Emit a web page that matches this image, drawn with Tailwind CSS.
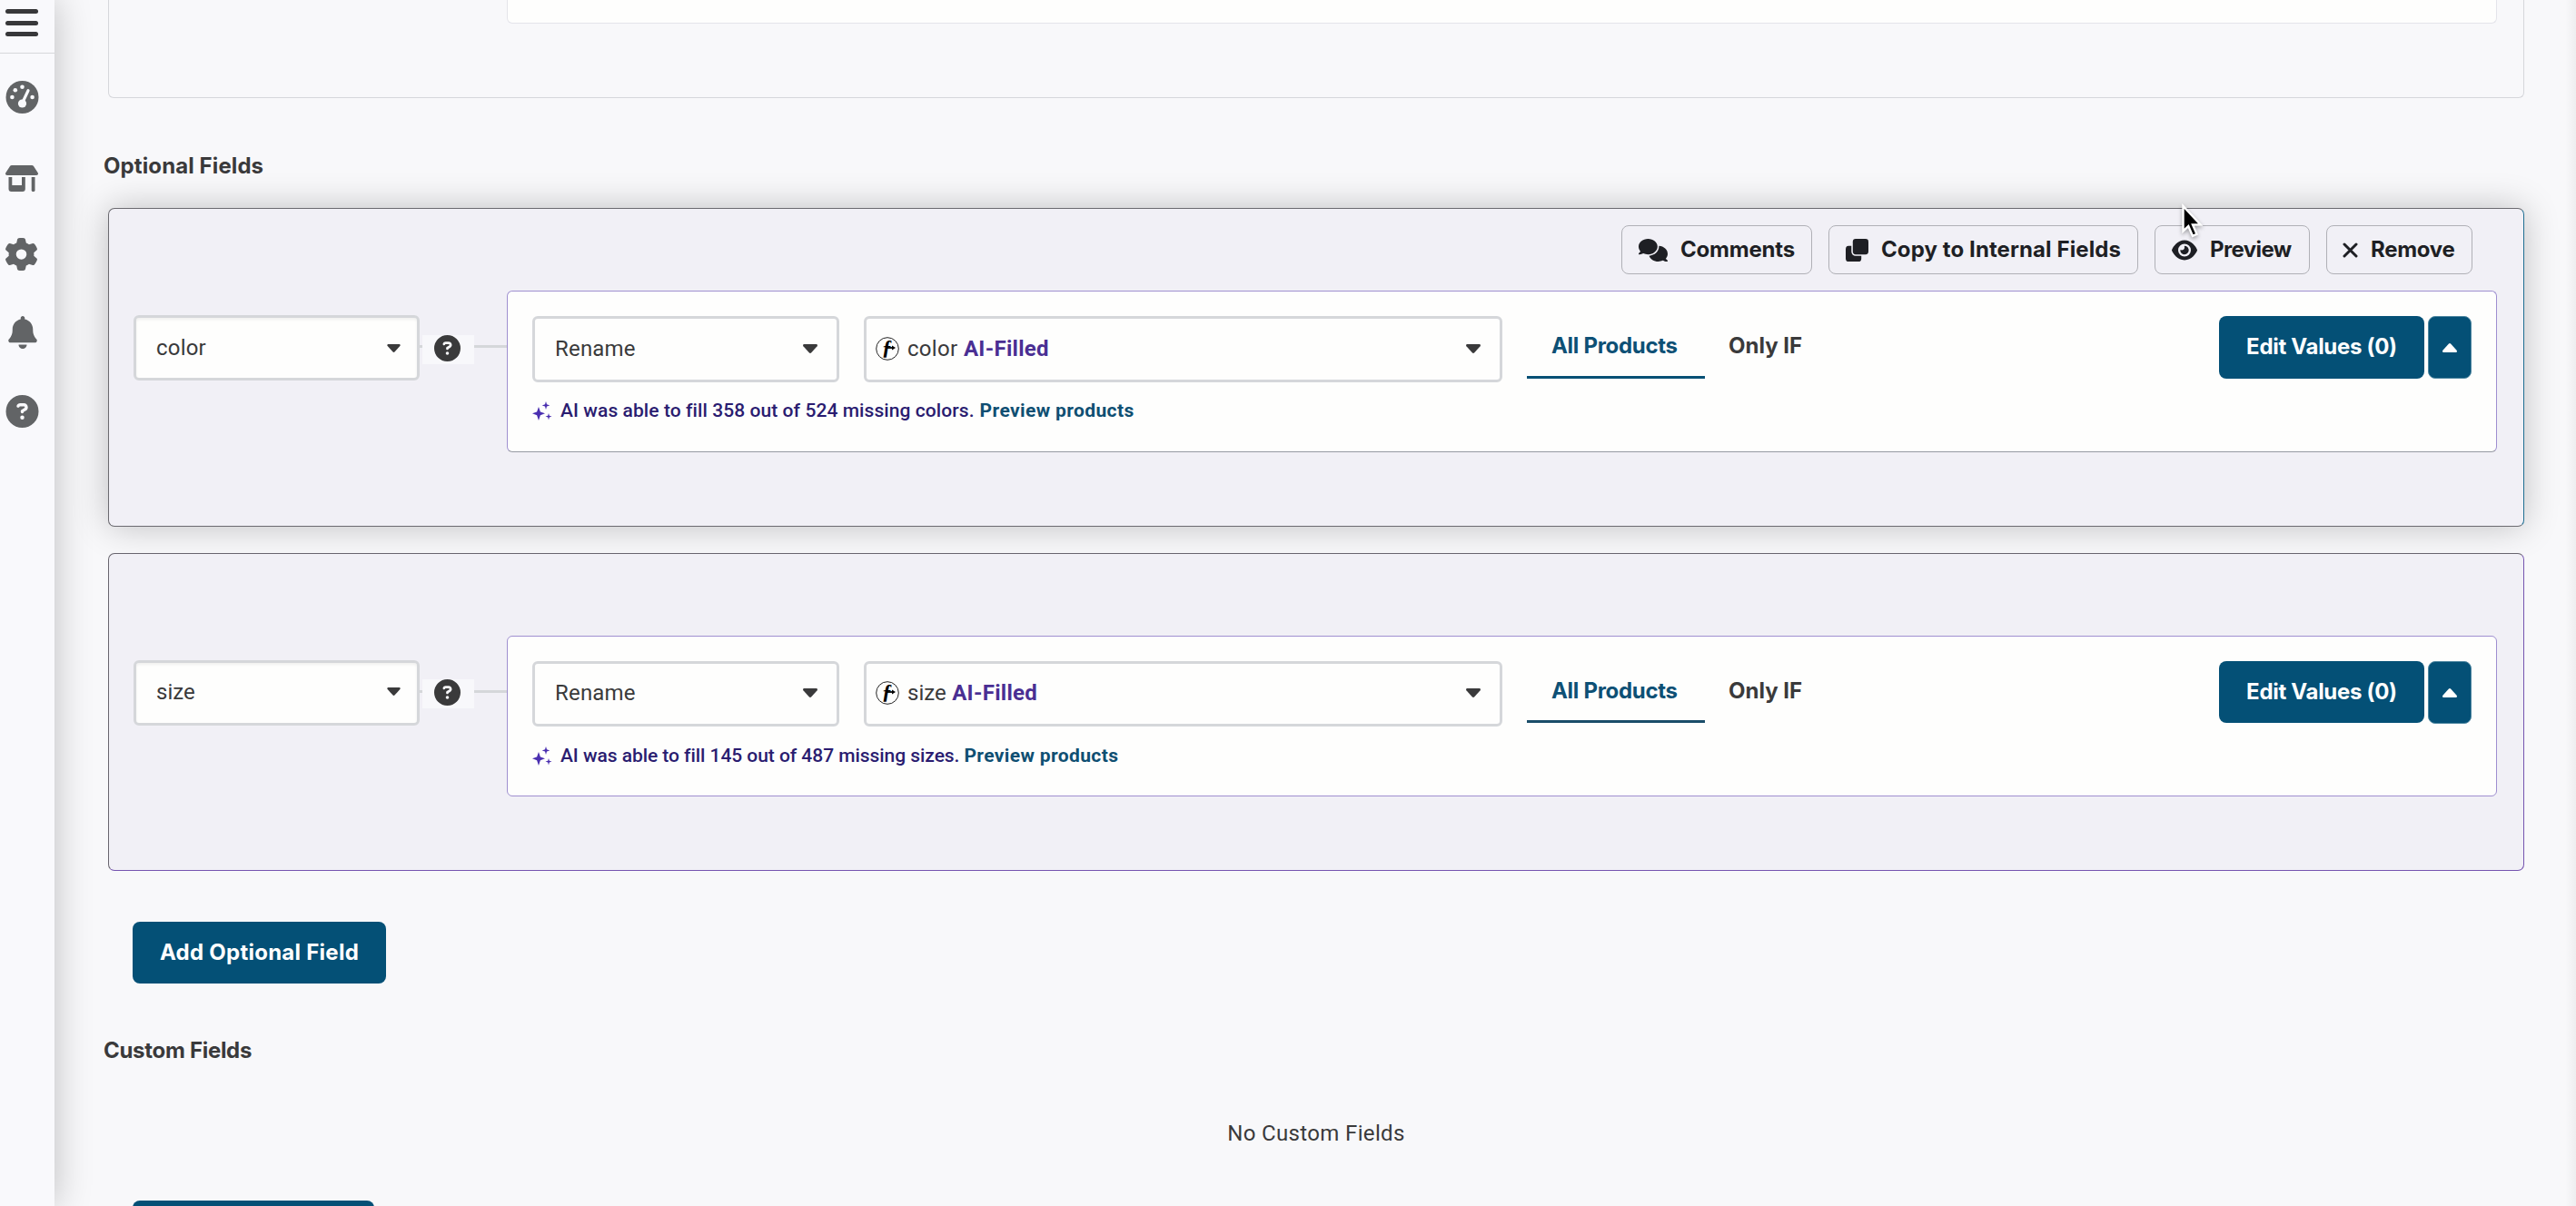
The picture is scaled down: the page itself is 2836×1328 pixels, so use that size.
<!DOCTYPE html>
<html lang="en">
<head>
  <meta charset="UTF-8">
  <meta name="viewport" content="width=device-width, initial-scale=1.0">
  <title>Field Mapping</title>
  <script src="https://cdn.jsdelivr.net/npm/@tailwindcss/browser@4"></script>
</head>
<body class="relative flex h-screen overflow-hidden bg-[#f8f8fa] font-[Roboto,sans-serif] text-2xl text-[#3a3a3b]">

  <!-- Shared icons -->
  <svg class="hidden">
    <symbol id="question" viewBox="0 0 512 512">
      <path fill="currentColor" d="M256 512A256 256 0 1 0 256 0a256 256 0 1 0 0 512zM169.8 165.3c7.9-22.3 29.1-37.3 52.8-37.3h58.3c34.9 0 63.1 28.3 63.1 63.1c0 22.6-12.1 43.5-31.7 54.8L280 264.4c-.2 13-10.9 23.6-24 23.6c-13.3 0-24-10.7-24-24V250.5c0-8.6 4.6-16.5 12.1-20.8l44.3-25.4c4.7-2.7 7.6-7.7 7.6-13.1c0-8.4-6.8-15.1-15.1-15.1H222.6c-3.4 0-6.4 2.1-7.5 5.3l-.4 1.2c-4.4 12.5-18.2 19-30.6 14.6s-19-18.2-14.6-30.6l.4-1.2zM224 352a32 32 0 1 1 64 0 32 32 0 1 1 -64 0z"/>
    </symbol>
    <symbol id="caret" viewBox="0 0 16 10">
      <path fill="currentColor" d="M1.4 0h13.2c1.2 0 1.8 1.4 1 2.3L9.3 9.3a1.8 1.8 0 0 1-2.600 0L.4 2.300C-.4 1.400.2 0 1.400 0z"/>
    </symbol>
    <symbol id="sparkles" viewBox="0 0 22 21">
      <path fill="currentColor" d="M7 6l1.900 5.400L14 13.300l-5.100 1.900L7 21l-1.900-5.800L0 13.300l5.100-1.900zM15 0l1 3.200 3.300 1.200L16 5.600 15 9l-1-3.400-3.300-1.200L14 3.200zM18 13l.8 2.700 2.700.9-2.700.9L18 20.500l-.8-3-2.700-.9 2.700-.9z"/>
    </symbol>
    <symbol id="func" viewBox="0 0 26 26">
      <circle cx="13" cy="13" r="12.300" fill="none" stroke="#222" stroke-width="1"/>
      <text x="12.500" y="18.500" text-anchor="middle" font-family="Liberation Serif, serif" font-style="italic" font-weight="bold" font-size="23" fill="#000">ƒ</text>
      <path d="M13 12h6" stroke="#000" stroke-width="1.800"/><path d="M18 9.500l4 2.500-4 2.500z"/>
    </symbol>
  </svg>

  <!-- Sidebar -->
  <nav class="z-10 flex w-[60px] shrink-0 flex-col bg-[#f9f9fc] pl-1.5 text-[#626466] shadow-[0_0_42px_rgba(0,0,0,0.24)]">
    <div class="-ml-1.5 flex h-[59px] shrink-0 flex-col gap-[7.5px] border-b border-[#d6d8da] pt-2.5 pl-1.5">
      <span class="h-[5px] w-9 rounded-full bg-[#38383a]"></span>
      <span class="h-[5px] w-9 rounded-full bg-[#38383a]"></span>
      <span class="h-[5px] w-9 rounded-full bg-[#38383a]"></span>
    </div>
    <svg class="mt-[30px] h-9 w-[37px]" viewBox="0 0 36 36">
      <circle cx="18" cy="18" r="18" fill="currentColor"/>
      <g fill="#f9f9fc">
        <circle cx="18" cy="6.700" r="2.300"/><circle cx="10.300" cy="10.200" r="2.300"/><circle cx="6.900" cy="18" r="2.300"/><circle cx="29.100" cy="18" r="2.300"/><circle cx="18" cy="25" r="4.600"/>
      </g>
      <path d="M18.500 23.500L24.500 10.700" stroke="#f9f9fc" stroke-width="3.200" stroke-linecap="round"/>
    </svg>
    <svg class="mt-[57px] h-[29px] w-9" viewBox="0 0 36 29" fill="currentColor">
      <path d="M7 0h22c.9 0 1.600.4 2 1.100l4.700 7.200c.8 1.300 0 2.700-1.500 2.700H1.800C.3 11-.5 9.600.3 8.300L5 1.100C5.400.4 6.100 0 7 0z"/>
      <path fill-rule="evenodd" d="M3.500 13h3.800v9H18v-9h3.800v13a3 3 0 0 1-3 3H6.500a3 3 0 0 1-3-3z"/>
      <path d="M28.700 13h3.800v14.200a1.900 1.900 0 0 1-3.800 0z"/>
    </svg>
    <svg class="mt-[51px] h-9 w-[35px]" viewBox="14 0 484 512" preserveAspectRatio="none">
      <path fill="currentColor" d="M495.9 166.6c3.2 8.7 .5 18.4-6.4 24.6l-43.3 39.4c1.1 8.3 1.7 16.8 1.7 25.4s-.6 17.1-1.7 25.4l43.3 39.4c6.9 6.2 9.6 15.9 6.4 24.6c-4.4 11.9-9.7 23.3-15.8 34.3l-4.7 8.1c-6.6 11-14 21.4-22.1 31.2c-5.9 7.2-15.7 9.6-24.5 6.8l-55.7-17.7c-13.4 10.3-28.2 18.9-44 25.4l-12.5 57.1c-2 9.1-9 16.3-18.2 17.8c-13.8 2.3-28 3.5-42.5 3.5s-28.7-1.2-42.5-3.5c-9.2-1.5-16.2-8.7-18.2-17.8l-12.5-57.1c-15.8-6.5-30.6-15.1-44-25.4L83.1 425.9c-8.8 2.8-18.6 .3-24.5-6.8c-8.1-9.8-15.5-20.2-22.1-31.2l-4.7-8.1c-6.1-11-11.4-22.4-15.8-34.3c-3.2-8.7-.5-18.4 6.4-24.6l43.3-39.4C64.6 273.1 64 264.6 64 256s.6-17.1 1.7-25.4L22.4 191.2c-6.900-6.200-9.600-15.900-6.400-24.600c4.400-11.900 9.700-23.300 15.800-34.300l4.700-8.100c6.600-11 14-21.400 22.100-31.200c5.900-7.200 15.700-9.600 24.500-6.800l55.700 17.700c13.400-10.300 28.200-18.900 44-25.400l12.500-57.100c2-9.100 9-16.300 18.200-17.800C227.300 1.200 241.500 0 256 0s28.700 1.200 42.500 3.500c9.200 1.500 16.200 8.700 18.200 17.800l12.500 57.100c15.800 6.500 30.600 15.100 44 25.400l55.700-17.700c8.800-2.800 18.600-.3 24.500 6.800c8.100 9.800 15.500 20.200 22.100 31.200l4.700 8.100c6.100 11 11.400 22.400 15.800 34.300zM256 336a80 80 0 1 0 0-160 80 80 0 1 0 0 160z"/>
    </svg>
    <svg class="mt-[50px] ml-[2.5px] h-9 w-8" viewBox="0 0 448 512">
      <path fill="currentColor" d="M224 0c-17.700 0-32 14.300-32 32V51.200C119 66 64 130.600 64 208v18.800c0 47-17.300 92.400-48.500 127.600l-7.400 8.300c-8.400 9.400-10.400 22.900-5.300 34.400S19.400 416 32 416H416c12.600 0 24-7.400 29.200-18.900s3.100-25-5.300-34.400l-7.400-8.300C401.300 319.200 384 273.900 384 226.800V208c0-77.400-55-142-128-156.800V32c0-17.700-14.300-32-32-32zm45.300 493.300c12-12 18.700-28.300 18.700-45.300H224 160c0 17 6.700 33.300 18.700 45.300s28.300 18.700 45.300 18.700s33.300-6.700 45.300-18.700z"/>
    </svg>
    <svg class="mt-[51px] h-9 w-[37px]"><use href="#question"/></svg>
  </nav>

  <!-- Main column -->
  <main class="flex flex-1 flex-col pr-[57px] pl-[59px]">

    <!-- Tail of the required fields card -->
    <section class="flex h-[108px] shrink-0 justify-end rounded-b-md border border-t-0 border-[#d6d7db] pr-[29px]">
      <div class="h-[26px] w-[2191px] rounded-b-md border border-t-0 border-[#e4e4ea] bg-[#fefefd]"></div>
    </section>

    <h2 class="mt-[60px] -ml-[5px] h-[30px] shrink-0 font-['Inter'] leading-[30px] font-bold tracking-[0.1px]">Optional Fields</h2>

    <!-- color -->
    <section class="mt-[31px] flex h-[351px] shrink-0 flex-col rounded-[7px] border border-[#6b6a70] border-r-[#1f6f93] bg-[#f1f0f6] shadow-[0_0_38px_rgba(0,0,0,0.23)]">
      <div class="flex h-[90px] justify-end gap-[18px] pt-[18px] pr-14 font-['Inter'] font-bold text-[#1e1f24]">
        <button class="flex h-[54px] w-[210px] items-center rounded-lg border border-[#b0b0b6] pl-[18px]">
          <svg class="mr-3.5 h-[25px] w-8" viewBox="0 0 640 512" preserveAspectRatio="none"><path fill="currentColor" d="M208 352c114.900 0 208-78.800 208-176S322.900 0 208 0S0 78.800 0 176c0 38.600 14.700 74.300 39.600 103.400c-3.500 9.400-8.700 17.700-14.200 24.700c-4.800 6.200-9.700 11-13.300 14.300c-1.800 1.600-3.300 2.900-4.300 3.700c-.5 .4-.9 .7-1.100 .8l-.2 .2C1 327.200-1.400 334.400 .8 340.900S9.100 352 16 352c21.800 0 43.800-5.600 62.100-12.500c9.200-3.500 17.800-7.400 25.200-11.400C134.100 343.300 169.800 352 208 352zM448 176c0 112.300-99.100 196.900-216.500 207C255.800 457.400 336.400 512 432 512c38.200 0 73.900-8.700 104.700-23.900c7.500 4 16 7.900 25.200 11.400c18.300 6.900 40.300 12.500 62.100 12.500c6.900 0 13.100-4.500 15.200-11.100c2.100-6.600-.2-13.800-5.800-17.900l-.2-.2c-.2-.2-.6-.4-1.100-.8c-1-.8-2.500-2-4.300-3.700c-3.600-3.300-8.500-8.100-13.300-14.300c-5.500-7-10.700-15.400-14.200-24.700c24.900-29 39.600-64.700 39.600-103.400c0-92.800-84.900-168.900-192.600-175.500c.4 5.100 .6 10.300 .6 15.500z"/></svg>
          <span class="tracking-[-0.2px]">Comments</span>
        </button>
        <button class="flex h-[54px] w-[341px] items-center rounded-lg border border-[#b0b0b6] pl-[18px]">
          <svg class="mr-3.5 size-[25px]" viewBox="0 0 512 512" fill="currentColor"><rect x="160" width="352" height="352" rx="64"/><path d="M0 224a64 64 0 0 1 64-64h64v128a96 96 0 0 0 96 96h128v64a64 64 0 0 1-64 64H64a64 64 0 0 1-64-64z"/></svg>
          <span class="tracking-[0.1px]">Copy to Internal Fields</span>
        </button>
        <button class="flex h-[54px] w-[171px] items-center rounded-lg border border-[#b0b0b6] pl-[18px]">
          <svg class="mr-3.5 h-[25px] w-7" viewBox="0 0 576 512"><path fill="currentColor" d="M288 32c-80.800 0-145.500 36.800-192.600 80.600C48.600 156 17.300 208 2.500 243.700c-3.300 7.900-3.300 16.700 0 24.600C17.300 304 48.600 356 95.400 399.400C142.500 443.200 207.200 480 288 480s145.500-36.800 192.600-80.600c46.800-43.500 78.100-95.400 93-131.100c3.300-7.900 3.300-16.700 0-24.600c-14.900-35.700-46.200-87.700-93-131.100C433.500 68.800 368.800 32 288 32zM144 256a144 144 0 1 1 288 0 144 144 0 1 1 -288 0zm144-64c0 35.300-28.700 64-64 64c-7.100 0-13.900-1.200-20.300-3.300c-5.500-1.800-11.900 1.600-11.700 7.400c.3 6.900 1.300 13.800 3.200 20.700c13.700 51.200 66.400 81.600 117.600 67.900s81.600-66.400 67.900-117.600c-11.100-41.500-47.800-69.400-88.600-71.100c-5.800-.2-9.200 6.100-7.400 11.700c2.100 6.400 3.300 13.200 3.300 20.300z"/></svg>
          <span class="tracking-[-0.6px]">Preview</span>
        </button>
        <button class="flex h-[54px] w-[161px] items-center rounded-lg border border-[#b0b0b6] pl-[17px]">
          <svg class="mr-3.5 size-[17px]" viewBox="0 0 17 17"><path d="M2 2l13 13M15 2L2 15" stroke="currentColor" stroke-width="3" stroke-linecap="round"/></svg>
          <span class="tracking-[-0.3px]">Remove</span>
        </button>
      </div>

      <div class="flex items-start pl-[27px]">
        <div class="mt-[27px] flex h-[72px] w-[315px] items-center justify-between rounded-md border-3 border-[#d5d7da] bg-[#fefefd] pr-[18px] pl-[22px] shadow-[inset_0_2px_3px_rgba(0,0,0,0.06)]">
          <span class="tracking-[0.2px]">color</span>
          <svg class="h-[9px] w-[15px]"><use href="#caret"/></svg>
        </div>
        <div class="mt-[60px] flex h-[3px] w-24 bg-[#d5d7da]">
          <div class="-mt-[11px] ml-[3px] h-8 w-[57px] shrink-0 bg-[#f8f8fb] pl-[13px]">
            <svg class="size-[29px]"><use href="#question"/></svg>
          </div>
        </div>

        <div class="h-[178px] w-[2191px] rounded-md border border-[#9f8fd0] border-b-[#9699a3] bg-[#fefefd] px-[27px]">
          <div class="flex items-start">
            <div class="mt-[27px] flex h-[73px] w-[338px] items-center justify-between rounded-md border-3 border-[#d5d7da] pr-[21px] pb-px pl-[22px]">
              <span class="tracking-[0.2px]">Rename</span>
              <svg class="h-2.5 w-4"><use href="#caret"/></svg>
            </div>
            <div class="mt-[27px] ml-[27px] flex h-[73px] w-[703px] items-center rounded-md border-3 border-[#d5d7da] pr-[21px] pb-px pl-[10px]">
              <svg class="mr-[9px] size-[26px]"><use href="#func"/></svg>
              <span class="tracking-[0.3px]">color</span>
              <span class="ml-[6.5px] font-bold tracking-[0.3px] text-[#4a2f93]">AI-Filled</span>
              <svg class="ml-auto h-2.5 w-4"><use href="#caret"/></svg>
            </div>
            <div class="mt-[26px] ml-[27px] flex h-[70px] font-['Inter'] font-bold">
              <span class="flex w-[196px] items-center border-b-3 border-[#065075] pl-[27px] tracking-[-0.3px] text-[#0d5075]">All Products</span>
              <span class="flex items-center border-b-3 border-transparent pl-[26px]">Only IF</span>
            </div>
            <div class="mt-[27px] ml-auto flex gap-1 font-['Inter'] font-bold text-white">
              <button class="flex h-[69px] w-[226px] items-center justify-center rounded-lg bg-[#045076] pb-0.5 tracking-[-0.3px]">Edit Values (0)</button>
              <button class="flex h-[69px] w-12 items-center justify-center rounded-lg border border-[#4d86a0] bg-[#045076]"><svg class="h-2.5 w-4 rotate-180"><use href="#caret"/></svg></button>
            </div>
          </div>
          <p class="mt-[19px] flex h-6 items-center text-[21px] leading-6 font-medium tracking-[0.08px] text-[#2a1c70]">
            <svg class="mr-[9px] h-[21px] w-[22px] text-[#4a2fb0]"><use href="#sparkles"/></svg>
            AI was able to fill 358 out of 524 missing colors.
            <a class="ml-[6px] font-bold tracking-[0.38px] text-[#0f4f72]">Preview products</a>
          </p>
        </div>
      </div>
    </section>

    <!-- size -->
    <section class="mt-[29px] flex h-[350px] shrink-0 flex-col rounded-[7px] border border-[#68656e] border-r-[#7655b0] border-b-[#7655b0] bg-[#f1f0f6] pt-[90px]">
      <div class="flex items-start pl-[27px]">
        <div class="mt-[27px] flex h-[72px] w-[315px] items-center justify-between rounded-md border-3 border-[#d5d7da] bg-[#fefefd] pr-[18px] pb-[3px] pl-[22px] shadow-[inset_0_2px_3px_rgba(0,0,0,0.06)]">
          <span>size</span>
          <svg class="h-[9px] w-[15px]"><use href="#caret"/></svg>
        </div>
        <div class="mt-[60px] flex h-[3px] w-24 bg-[#d5d7da]">
          <div class="-mt-3 ml-[3px] h-8 w-[57px] shrink-0 bg-[#f8f8fb] pl-[13px]">
            <svg class="size-[29px]"><use href="#question"/></svg>
          </div>
        </div>

        <div class="h-[177px] w-[2191px] rounded-md border border-[#9f8fd0] bg-[#fefefd] px-[27px]">
          <div class="flex items-start">
            <div class="mt-[27px] flex h-[72px] w-[338px] items-center justify-between rounded-md border-3 border-[#d5d7da] pr-[21px] pb-0.5 pl-[22px]">
              <span class="tracking-[0.2px]">Rename</span>
              <svg class="h-2.5 w-4"><use href="#caret"/></svg>
            </div>
            <div class="mt-[27px] ml-[27px] flex h-[72px] w-[703px] items-center rounded-md border-3 border-[#d5d7da] pr-[21px] pb-0.5 pl-[10px]">
              <svg class="mr-[9px] size-[26px]"><use href="#func"/></svg>
              <span>size</span>
              <span class="ml-[6.5px] font-bold tracking-[0.3px] text-[#4a2f93]">AI-Filled</span>
              <svg class="ml-auto h-2.5 w-4"><use href="#caret"/></svg>
            </div>
            <div class="mt-[26px] ml-[27px] flex h-[69px] font-['Inter'] font-bold">
              <span class="flex w-[196px] items-center border-b-3 border-[#1a4d69] pt-px pl-[27px] tracking-[-0.3px] text-[#0d5075]">All Products</span>
              <span class="flex items-center border-b-3 border-transparent pt-px pl-[26px]">Only IF</span>
            </div>
            <div class="mt-[27px] ml-auto flex gap-1 font-['Inter'] font-bold text-white">
              <button class="flex h-[68px] w-[226px] items-center justify-center rounded-lg bg-[#045076] tracking-[-0.3px]">Edit Values (0)</button>
              <button class="flex h-[69px] w-12 items-center justify-center rounded-lg border border-[#4d86a0] bg-[#045076]"><svg class="h-2.5 w-4 rotate-180"><use href="#caret"/></svg></button>
            </div>
          </div>
          <p class="mt-5 flex h-6 items-center text-[21px] leading-6 font-medium tracking-[-0.05px] text-[#2a1c70]">
            <svg class="mr-[9px] h-[21px] w-[22px] text-[#4a2fb0]"><use href="#sparkles"/></svg>
            AI was able to fill 145 out of 487 missing sizes.
            <a class="ml-[5px] font-bold tracking-[0.38px] text-[#0f4f72]">Preview products</a>
          </p>
        </div>
      </div>
    </section>

    <button class="mt-14 ml-[27px] flex h-[68px] w-[279px] shrink-0 items-center justify-center rounded-lg bg-[#045076] font-['Inter'] font-bold tracking-[0.25px] text-white">Add Optional Field</button>

    <h2 class="mt-[59px] -ml-[5px] h-[30px] shrink-0 font-['Inter'] leading-[30px] font-bold tracking-[-0.3px]">Custom Fields</h2>
    <p class="mt-[60px] h-8 shrink-0 text-center leading-8 tracking-[0.35px]">No Custom Fields</p>
    <button class="mt-[58px] ml-[27px] h-[68px] w-[266px] shrink-0 rounded-lg bg-[#045076]"></button>
  </main>

  <!-- Faint edge at the right of the window -->
  <div class="absolute inset-y-0 right-0 w-3 bg-linear-to-r from-transparent to-black/4"></div>

  <!-- Mouse pointer -->
  <svg class="absolute top-[224px] left-[2399px] z-20 h-[42px] w-[30px] drop-shadow-[0_2px_2px_rgba(0,0,0,0.35)]" viewBox="0 0 30 42">
    <path d="M4.500 3v27.500l5.800-5.400 4.600 10.700 4.600-2-4.500-10.300h8.700z" fill="#000" stroke="#fff" stroke-width="2.400"/>
  </svg>

</body>
</html>
